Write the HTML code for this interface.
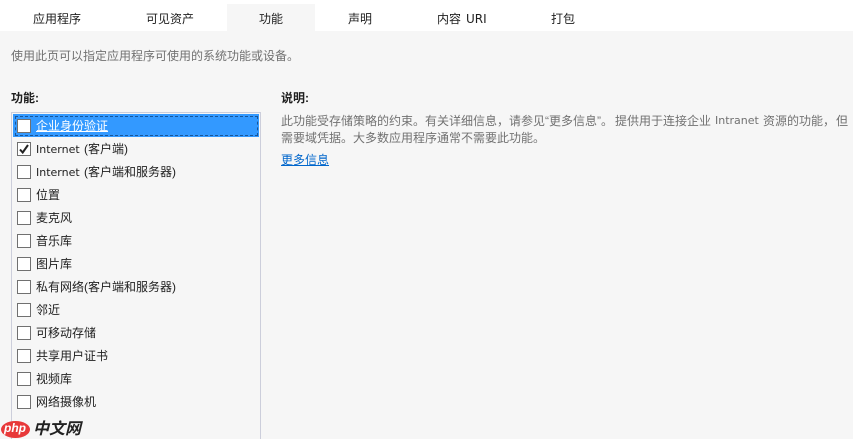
<!DOCTYPE html>
<html><head><meta charset="utf-8"><style>
html,body{margin:0;padding:0;width:853px;height:439px;overflow:hidden;background:#f6f6f6}
body{position:relative;font:12px "Liberation Sans","Microsoft YaHei","Noto Sans CJK SC",sans-serif;color:#1e1e1e}
.a{position:absolute;white-space:nowrap;line-height:16px}
#bar{position:absolute;left:0;top:0;width:853px;height:31px;background:#fff}
#act{position:absolute;left:227px;top:4px;width:88px;height:27px;background:#f6f6f6}
.g{color:#717171}
.b{font-weight:bold;color:#1e1e1e}
#list{position:absolute;left:11px;top:112px;width:248px;height:340px;border:1px solid #ccceDB}
#sel{position:absolute;left:13px;top:114px;width:246px;height:23px;background:#3399ff}
#foc{position:absolute;left:15px;top:116px;width:241px;height:18px;border:1px dashed #1a5596}
.c{position:absolute;left:17px;width:12px;height:12px;border:1px solid #707070;background:#fff}
.l{left:36px}
.e{font-family:"DejaVu Sans",sans-serif;font-size:11px}
.m{margin-right:1px}
.u{font-family:"DejaVu Sans",sans-serif;font-size:12px}
</style></head><body>
<div id="bar"></div><div id="act"></div>
<div class="a" style="left:33px;top:11px">应用程序</div>
<div class="a" style="left:146px;top:11px">可见资产</div>
<div class="a" style="left:259px;top:11px">功能</div>
<div class="a" style="left:348px;top:11px">声明</div>
<div class="a" style="left:437px;top:11px">内容</div>
<div class="a u" style="left:466px;top:11px">URI</div>
<div class="a" style="left:551px;top:11px">打包</div>
<div class="a g" style="left:11px;top:48px">使用此页可以指定应用程序可使用的系统功能或设备。</div>
<div class="a b" style="left:11px;top:90px">功能:</div>
<div class="a b" style="left:281px;top:90px">说明:</div>
<div class="a g" style="left:281px;top:113px">此功能受存储策略的约束。有关详细信息，请参见“更多信息”。</div>
<div class="a g" style="left:615px;top:113px">提供用于连接企业</div>
<div class="a g e" style="left:715px;top:113px">Intranet</div>
<div class="a g" style="left:763px;top:113px">资源的功能，</div>
<div class="a g" style="left:836px;top:113px">但</div>
<div class="a g" style="left:281px;top:130px">需要域凭据。大多数应用程序通常不需要此功能。</div>
<div class="a" style="left:281px;top:152px;color:#0066cc;text-decoration:underline">更多信息</div>
<div id="list"></div><div id="sel"></div><div id="foc"></div>
<div class="c" style="top:119px"></div><div class="a l" style="top:118px;color:#fff;text-decoration:underline">企业身份验证</div>
<div class="c" style="top:142px"><svg width="12" height="12" style="display:block"><path d="M2 6.5L4.7 9.5L10 2" fill="none" stroke="#222" stroke-width="2"/></svg></div><div class="a l" style="top:141px"><span class="e m">Internet</span> (客户端)</div>
<div class="c" style="top:165px"></div><div class="a l" style="top:164px"><span class="e m">Internet</span> (客户端和服务器)</div>
<div class="c" style="top:188px"></div><div class="a l" style="top:187px">位置</div>
<div class="c" style="top:211px"></div><div class="a l" style="top:210px">麦克风</div>
<div class="c" style="top:234px"></div><div class="a l" style="top:233px">音乐库</div>
<div class="c" style="top:257px"></div><div class="a l" style="top:256px">图片库</div>
<div class="c" style="top:280px"></div><div class="a l" style="top:279px">私有网络(客户端和服务器)</div>
<div class="c" style="top:303px"></div><div class="a l" style="top:302px">邻近</div>
<div class="c" style="top:326px"></div><div class="a l" style="top:325px">可移动存储</div>
<div class="c" style="top:349px"></div><div class="a l" style="top:348px">共享用户证书</div>
<div class="c" style="top:372px"></div><div class="a l" style="top:371px">视频库</div>
<div class="c" style="top:395px"></div><div class="a l" style="top:394px">网络摄像机</div>
<div style="position:absolute;left:1px;top:421px;width:29px;height:17px;border-radius:50%;background:#e8393a"></div>
<div class="a" style="left:4px;top:420px;color:#fff;font:italic bold 12px/17px 'Liberation Sans',sans-serif">php</div>
<div class="a" style="left:33px;top:420px;font:italic bold 16px/19px 'Liberation Sans','Noto Sans CJK SC',sans-serif;color:#222">中文网</div>
</body></html>
